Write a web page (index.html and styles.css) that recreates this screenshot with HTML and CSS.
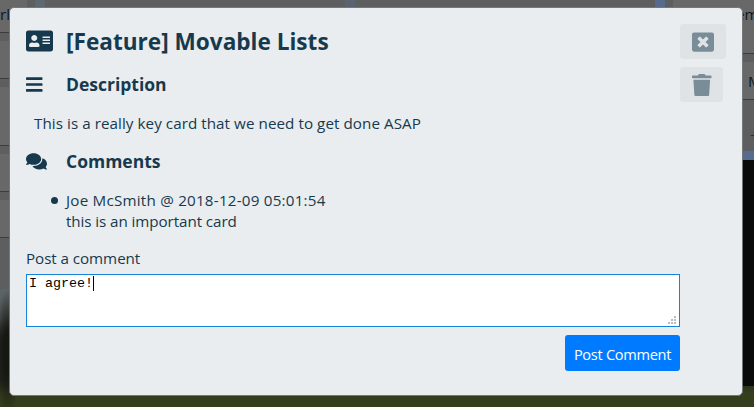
FILE: index.html
```html
<!DOCTYPE html>
<html lang="en">
<head>
<meta charset="utf-8">
<title>Board</title>
<link rel="stylesheet" href="styles.css">
</head>
<body>
<div class="viewport">
<div class="board">
  <section class="list list-first">
    <div class="card c-top end"><span>rl</span></div>
    <div class="card"></div>
    <div class="card tall"></div>
    <div class="card"></div>
    <div class="card"></div>
  </section>
  <section class="list"></section>
  <section class="list"></section>
  <section class="list list-last">
    <div class="card c-member"><span>em</span></div>
    <div class="card c-more"><span>M</span></div>
    <div class="add">+</div>
  </section>
</div>
</div>
<div class="overlay">
  <main class="modal">
    <div class="content">
      <h1 class="heading title"><span class="icon"><svg width="27" height="24" viewBox="0 0 576 512"><path d="M528 32H48C21.5 32 0 53.5 0 80v352c0 26.5 21.5 48 48 48h480c26.5 0 48-21.5 48-48V80c0-26.500-21.500-48-48-48zm-352 96c35.300 0 64 28.700 64 64s-28.700 64-64 64-64-28.700-64-64 28.700-64 64-64zm112 236.800c0 10.600-10 19.200-22.400 19.200H86.400C74 384 64 375.400 64 364.800v-19.200c0-31.800 30.100-57.600 67.200-57.600h5c12.300 5.100 25.700 8 39.800 8s27.600-2.900 39.800-8h5c37.100 0 67.200 25.800 67.200 57.600v19.200zM512 312c0 4.400-3.600 8-8 8H360c-4.400 0-8-3.600-8-8v-16c0-4.400 3.600-8 8-8h144c4.400 0 8 3.600 8 8v16zm0-64c0 4.400-3.600 8-8 8H360c-4.400 0-8-3.600-8-8v-16c0-4.400 3.600-8 8-8h144c4.400 0 8 3.600 8 8v16zm0-64c0 4.400-3.600 8-8 8H360c-4.400 0-8-3.600-8-8v-16c0-4.400 3.600-8 8-8h144c4.400 0 8 3.600 8 8v16z"/></svg></span><span>[Feature] Movable Lists</span></h1>
      <h2 class="heading description-head"><span class="icon"><svg width="16.500" height="19" viewBox="0 0 448 512"><path d="M16 132h416c8.800 0 16-7.200 16-16V76c0-8.800-7.200-16-16-16H16C7.200 60 0 67.200 0 76v40c0 8.800 7.200 16 16 16zm0 160h416c8.800 0 16-7.200 16-16v-40c0-8.800-7.200-16-16-16H16c-8.800 0-16 7.200-16 16v40c0 8.800 7.200 16 16 16zm0 160h416c8.800 0 16-7.200 16-16v-40c0-8.800-7.200-16-16-16H16c-8.800 0-16 7.200-16 16v40c0 8.800 7.200 16 16 16z"/></svg></span><span>Description</span></h2>
      <p class="description"><span>This is a really key card that we need to get done ASAP</span></p>
      <h2 class="heading comments-head"><span class="icon"><svg width="21" height="18.700" viewBox="0 0 576 512"><path d="M416 192c0-88.400-93.100-160-208-160S0 103.600 0 192c0 34.300 14.100 65.900 38 92-13.400 30.200-35.500 54.200-35.800 54.500-2.200 2.300-2.800 5.700-1.500 8.700S4.800 352 8 352c36.600 0 66.900-12.300 88.700-25 32.200 15.700 70.300 25 111.300 25 114.900 0 208-71.600 208-160zm122 220c23.900-26 38-57.700 38-92 0-66.900-53.500-124.200-129.300-148.100.9 6.600 1.300 13.300 1.300 20.100 0 105.900-107.700 192-240 192-10.800 0-21.300-.8-31.700-1.900C207.800 439.600 281.800 480 368 480c41 0 79.100-9.200 111.300-25 21.800 12.700 52.100 25 88.700 25 3.200 0 6.100-1.900 7.300-4.800 1.300-2.900.7-6.300-1.500-8.700-.3-.3-22.400-24.200-35.800-54.500z"/></svg></span><span>Comments</span></h2>
      <ul class="comments">
        <li><span class="bullet"></span><div><span class="meta">Joe McSmith @ 2018-12-09 05:01:54</span><br><span class="body">this is an important card</span></div></li>
      </ul>
      <div class="label"><span>Post a comment</span></div>
      <div class="field"><span class="value">I agree!</span><span class="caret"></span>
        <svg class="grip" width="8" height="8" viewBox="0 0 8 8"><path d="M6 0h2v2H6zM3 3h2v2H3zM6 3h2v2H6zM0 6h2v2H0zM3 6h2v2H3zM6 6h2v2H6z"/></svg>
      </div>
      <button class="post"><span>Post Comment</span></button>
    </div>
    <div class="actions">
      <button class="act close" aria-label="Close"><svg width="22" height="22" viewBox="0 0 512 512"><path d="M464 32H48C21.500 32 0 53.500 0 80v352c0 26.500 21.500 48 48 48h416c26.500 0 48-21.500 48-48V80c0-26.500-21.500-48-48-48zm-83.600 290.500c4.800 4.800 4.800 12.600 0 17.400l-40.500 40.500c-4.800 4.800-12.600 4.800-17.400 0L256 313.300l-66.500 67.100c-4.800 4.800-12.600 4.800-17.400 0l-40.500-40.500c-4.800-4.800-4.800-12.600 0-17.400l67.100-66.500-67.100-66.500c-4.800-4.800-4.800-12.600 0-17.400l40.500-40.500c4.800-4.800 12.600-4.800 17.400 0l66.500 67.100 66.500-67.100c4.800-4.800 12.600-4.800 17.400 0l40.500 40.500c4.800 4.800 4.800 12.600 0 17.400L313.300 256l67.100 66.500z"/></svg></button>
      <button class="act trash" aria-label="Delete"><svg width="19.500" height="22.500" viewBox="0 0 448 512"><path d="M432 32H312l-9.400-18.700A24 24 0 0 0 281.100 0H166.800a23.720 23.720 0 0 0-21.400 13.300L136 32H16A16 16 0 0 0 0 48v32a16 16 0 0 0 16 16h416a16 16 0 0 0 16-16V48a16 16 0 0 0-16-16zM53.200 467a48 48 0 0 0 47.900 45h245.800a48 48 0 0 0 47.900-45L416 128H32z"/></svg></button>
    </div>
  </main>
</div>
</body>
</html>
```
FILE: styles.css
```css
* { box-sizing: border-box; }
body {
  margin: 0;
  width: 754px;
  height: 407px;
  overflow: hidden;
  position: relative;
  font: 15.2px/21px "Open Sans", "Noto Sans", sans-serif;
  color: #17394d;
  background:
    radial-gradient(ellipse 14px 62px at 8px 352px, #151812 30%, transparent),
    linear-gradient(90deg, transparent 40px, #080b0a 60px) 0 160px / 100% 226px no-repeat,
    linear-gradient(90deg, #606870 0, #5c6370 50%, #566c8e 90%) 0 0 / 100% 160px no-repeat,
    linear-gradient(#5d6467 290px, #555a5c 318px, #282c25 336px, #242820 380px, #343e1c 393px, #343e1c);
}
h1, h2, p, ul { margin: 0; padding: 0; }
svg { display: block; fill: currentColor; }
.viewport { width: 754px; overflow: hidden; }
.board { display: flex; align-items: flex-start; gap: 10px; width: 1230px; margin-left: -265px; }
.list { width: 300px; height: 151px; flex: none; padding: 0 8px; background: #5d5e60; }
.list-first { height: 289px; }
.card {
  height: 38px;
  margin-bottom: 8px;
  background: #686868;
  border-bottom: 1px solid #3c3c3c;
  color: #0b1626;
}
.c-top { height: 33px; }
.tall { height: 59px; }
.end { text-align: right; padding: 4px 17px 0 0; }
.c-member { height: 54px; padding-top: 4px; text-indent: 63px; }
.c-more { text-indent: 75px; padding-top: 9px; }
.add { text-indent: 77px; line-height: 54px; color: #26313a; }
.overlay { position: absolute; inset: 0; padding: 7px 11px 11px 9px; }
.modal {
  height: 389px;
  border: 1px solid #747878;
  border-radius: 5px;
  background: #e9edf0;
  display: flex;
  padding: 16px 15px 0 16px;
}
.content { width: 654px; flex: none; display: flex; flex-direction: column; }
.heading { display: flex; align-items: center; font-weight: 700; }
.icon { width: 40px; flex: none; }
.title { height: 34px; font-size: 22.6px; }
.description-head, .comments-head { font-size: 17.5px; height: 24px; }
.description-head { margin-top: 14px; }
.description-head .icon, .comments-head .icon { padding-top: 1px; }
.description { padding-left: 8px; margin-top: 17px; letter-spacing: 0.06px; }
.comments-head { margin-top: 15px; }
.comments { list-style: none; margin-top: 17px; }
.comments li { display: flex; }
.meta { letter-spacing: 0.22px; }
.body { letter-spacing: -0.08px; }
.bullet { width: 7px; height: 7px; border-radius: 50%; background: currentColor; margin: 7px 8px 0 25px; flex: none; }
.label { margin-top: 16px; letter-spacing: -0.06px; }
.field {
  position: relative;
  height: 53px;
  margin-top: 5px;
  padding: 1px 2px;
  display: flex;
  background: #fff;
  border: 1px solid #1683d8;
  font: 13.333px/15px "Liberation Mono", monospace;
  color: #000;
}
.caret { width: 1px; height: 15px; background: #000; }
.grip { position: absolute; right: 3px; bottom: 2px; color: #bbb; }
.post {
  align-self: flex-end;
  width: 115px;
  height: 36px;
  margin-top: 8px;
  padding: 3px 0 0;
  border: 0;
  border-radius: 3px;
  background: #007bff;
  color: #fff;
  font: inherit;
  font-size: 14.6px;
  letter-spacing: -0.3px;
  white-space: nowrap;
}
.actions { display: flex; flex-direction: column; align-items: flex-start; gap: 8px; }
.act {
  height: 35px;
  width: 46px;
  padding: 0 0 0 12px;
  border: 0;
  border-radius: 3px;
  background: #dfe3e6;
  color: #798d99;
}
.trash { width: 43px; padding-top: 1px; }
```
